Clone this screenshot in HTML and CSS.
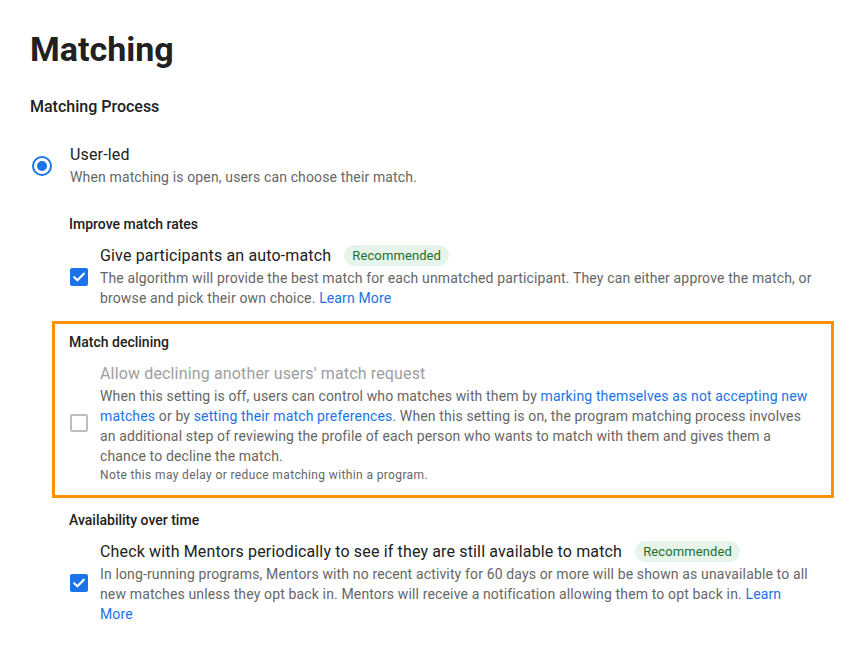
FILE: index.html
```html
<!DOCTYPE html>
<html lang="en">
<head>
    <meta charset="UTF-8">
    <meta name="viewport" content="width=device-width, initial-scale=1.0">
    <title>Matching</title>
    <link rel="stylesheet" href="styles.css">
</head>
<body>
    <h1 class="page-title">Matching</h1>
    <h2 class="section-title">Matching Process</h2>

    <div class="radio-row">
        <span class="radio checked"></span>
        <div class="option-text">
            <div class="option-label">User-led</div>
            <div class="option-desc">When matching is open, users can choose their match.</div>
        </div>
    </div>

    <div class="groups">
        <div class="group">
            <div class="group-title">Improve match rates</div>
            <div class="check-row">
                <span class="checkbox checked">
                    <svg viewBox="0 0 18 18" width="18" height="18"><path d="M4.2 9.2l3.2 3.1 6.4-6.6" fill="none" stroke="#fff" stroke-width="2.2" stroke-linecap="round" stroke-linejoin="round"/></svg>
                </span>
                <div class="option-text">
                    <div class="option-label">Give participants an auto-match <span class="badge">Recommended</span></div>
                    <div class="option-desc">The algorithm will provide the best match for each unmatched participant. They can either approve the match, or browse and pick their own choice. <a href="#">Learn More</a></div>
                </div>
            </div>
        </div>

        <div class="group highlight">
            <div class="group-title">Match declining</div>
            <div class="check-row">
                <span class="checkbox"></span>
                <div class="option-text">
                    <div class="option-label disabled">Allow declining another users' match request</div>
                    <div class="option-desc">When this setting is off, users can control who matches with them by <a href="#">marking themselves as not accepting new matches</a> or by <a href="#">setting their match preferences</a>. When this setting is on, the program matching process involves an additional step of reviewing the profile of each person who wants to match with them and gives them a chance to decline the match.</div>
                    <div class="option-note">Note this may delay or reduce matching within a program.</div>
                </div>
            </div>
        </div>

        <div class="group">
            <div class="group-title">Availability over time</div>
            <div class="check-row">
                <span class="checkbox checked">
                    <svg viewBox="0 0 18 18" width="18" height="18"><path d="M4.2 9.2l3.2 3.1 6.4-6.6" fill="none" stroke="#fff" stroke-width="2.2" stroke-linecap="round" stroke-linejoin="round"/></svg>
                </span>
                <div class="option-text">
                    <div class="option-label">Check with Mentors periodically to see if they are still available to match <span class="badge">Recommended</span></div>
                    <div class="option-desc">In long-running programs, Mentors with no recent activity for 60 days or more will be shown as unavailable to all new matches unless they opt back in. Mentors will receive a notification allowing them to opt back in. <a href="#">Learn More</a></div>
                </div>
            </div>
        </div>
    </div>
</body>
</html>
```

FILE: styles.css
```css
body{
    margin: 0;
    padding: 29px 0 0 30px;
    background-color: #fff;
    font-family: Roboto, "Liberation Sans", Arial, sans-serif;
    color: #212121;
}
.page-title{
    margin: 0;
    font-size: 34px;
    line-height: 40px;
    font-weight: 700;
}
.section-title{
    margin: 27px 0 0;
    font-size: 16px;
    line-height: 22px;
    font-weight: 500;
}
.radio-row{
    display: flex;
    align-items: center;
    gap: 18px;
    margin-top: 26px;
    padding-left: 2px;
}
.radio{
    width: 20px;
    height: 20px;
    box-sizing: border-box;
    border: 2px solid #1a73e8;
    border-radius: 50%;
    display: flex;
    align-items: center;
    justify-content: center;
    flex-shrink: 0;
}
.radio.checked::after{
    content: "";
    width: 10px;
    height: 10px;
    border-radius: 50%;
    background-color: #1a73e8;
}
.option-label{
    font-size: 16px;
    line-height: 22px;
    letter-spacing: 0.15px;
    margin-bottom: 1px;
}
.option-label.disabled{
    color: #9e9e9e;
}
.option-desc{
    font-size: 14px;
    line-height: 20px;
    letter-spacing: 0.14px;
    color: #666;
}
.option-desc a{
    color: #1a73e8;
    text-decoration: none;
}
.option-note{
    font-size: 12px;
    line-height: 16px;
    letter-spacing: 0.37px;
    margin-top: 1px;
    color: #666;
}
.badge{
    display: inline-block;
    margin-left: 9px;
    padding: 0 8px;
    height: 21px;
    line-height: 21px;
    border-radius: 11px;
    background-color: #e6f4ea;
    color: #1e6e2e;
    font-size: 13px;
    letter-spacing: 0.1px;
    vertical-align: 1px;
}
.groups{
    display: flex;
    flex-direction: column;
    gap: 1px;
    margin: 16px 0 0 22px;
    width: 782px;
}
.group{
    border: 3px solid transparent;
    padding: 8px 16px 9px 14px;
}
.group.highlight{
    border-color: #ff9100;
    padding-bottom: 12px;
}
.group-title{
    font-size: 14px;
    line-height: 20px;
    font-weight: 500;
    margin-bottom: 11px;
}
.check-row{
    display: flex;
    align-items: center;
    gap: 12px;
    padding-left: 1px;
}
.checkbox{
    width: 18px;
    height: 18px;
    box-sizing: border-box;
    border: 2px solid #bdbdbd;
    border-radius: 2px;
    flex-shrink: 0;
    display: flex;
}
.checkbox.checked{
    border: none;
    background-color: #1a73e8;
}
```
